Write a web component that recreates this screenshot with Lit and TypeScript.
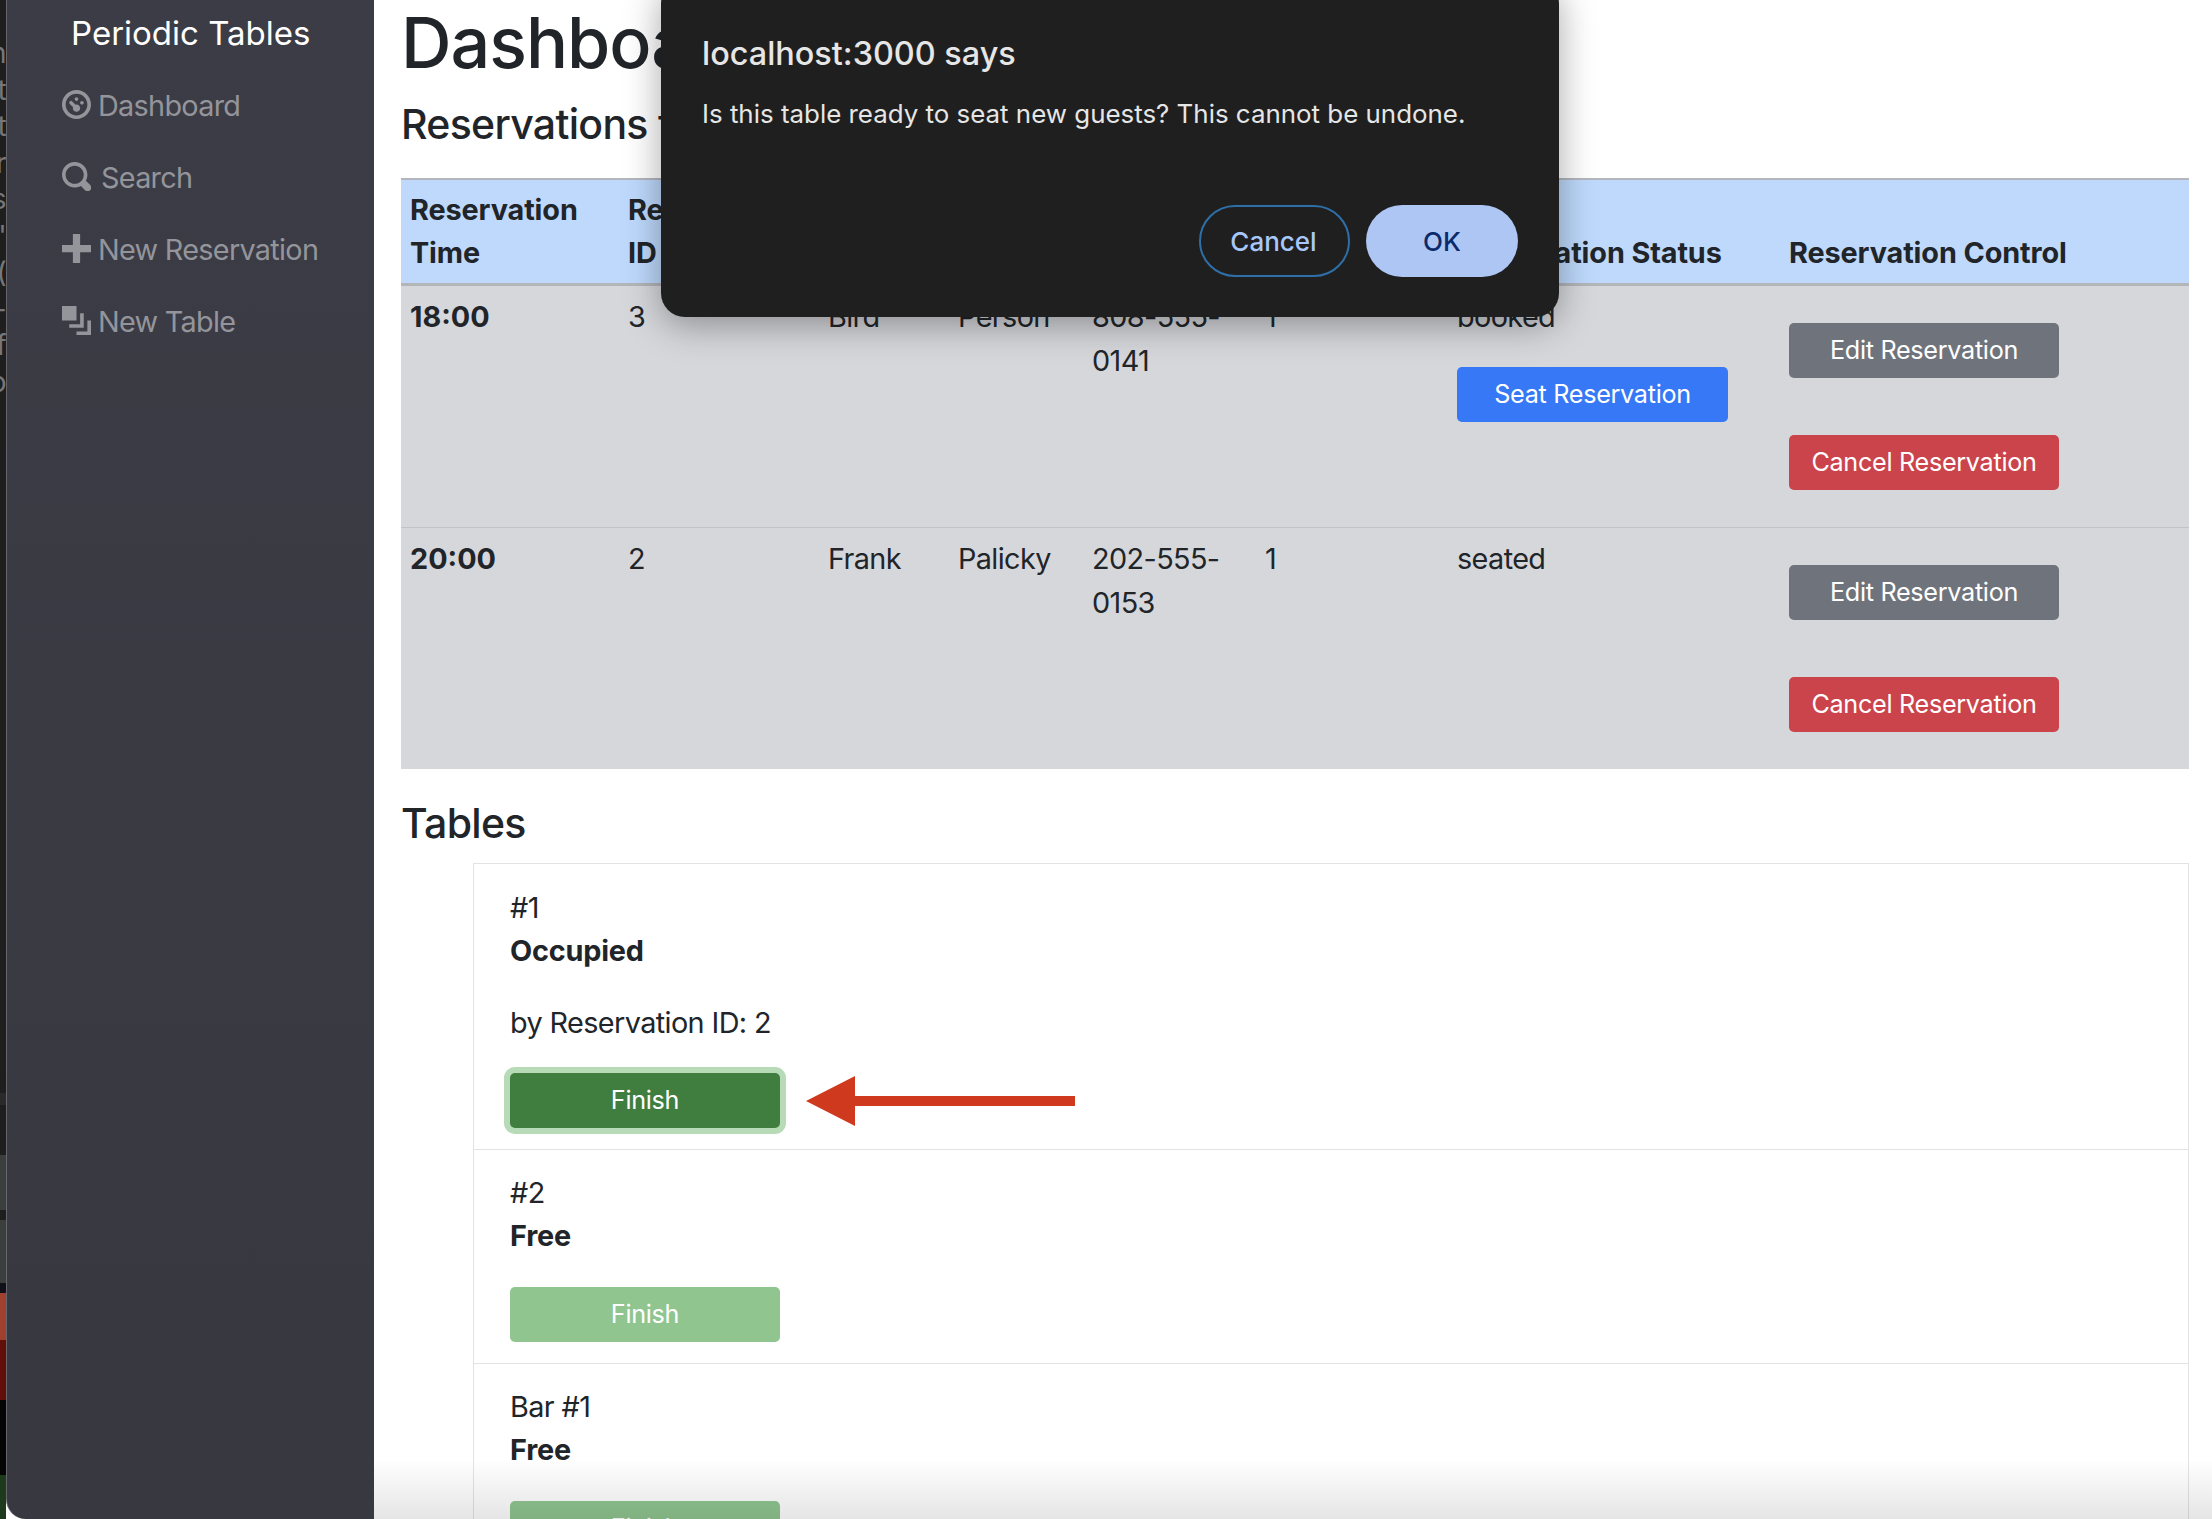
import { LitElement, html, css, svg } from 'lit';
import { customElement } from 'lit/decorators.js';

const ICONS: Record<string, any> = {
  dashboard: svg`<path d="M4 0c-2.2 0-4 1.8-4 4s1.8 4 4 4 4-1.8 4-4-1.8-4-4-4zm0 1c1.66 0 3 1.34 3 3s-1.34 3-3 3-3-1.34-3-3 1.34-3 3-3zm0 1c-.28 0-.5.22-.5.5s.22.5.5.5.5-.22.5-.5-.22-.5-.5-.5zm-1.66 1a.5.5 0 0 0-.19.84l.91.91c-.02.08-.06.16-.06.25 0 .55.45 1 1 1s1-.45 1-1-.45-1-1-1c-.09 0-.17.04-.25.06l-.91-.91a.5.5 0 0 0-.44-.16.5.5 0 0 0-.06 0zm3.16 0c-.28 0-.5.22-.5.5s.22.5.5.5.5-.22.5-.5-.22-.5-.5-.5z"/>`,
  search: svg`<path d="M3.5 0c-1.93 0-3.5 1.57-3.5 3.5s1.57 3.5 3.5 3.5c.59 0 1.17-.14 1.66-.41a1 1 0 0 0 .13.13l1 1a1.02 1.02 0 1 0 1.44-1.44l-1-1a1 1 0 0 0-.16-.13c.27-.49.44-1.06.44-1.66 0-1.93-1.57-3.5-3.5-3.5zm0 1c1.39 0 2.5 1.11 2.5 2.5 0 .66-.24 1.27-.66 1.72-.01.01-.02.02-.03.03a1 1 0 0 0-.13.13c-.44.4-1.04.63-1.69.63-1.39 0-2.5-1.11-2.5-2.5s1.11-2.5 2.5-2.5z"/>`,
  plus: svg`<path d="M3 0v3h-3v2h3v3h2v-3h3v-2h-3v-3h-2z"/>`,
  layers: svg`<path d="M0 0v4h4v-4h-4zm5 2v3h-3v1h4v-4h-1zm2 2v3h-3v1h4v-4h-1z"/>`,
};

const NAV = [
  { icon: 'dashboard', label: 'Dashboard', wide: false },
  { icon: 'search', label: 'Search', wide: true },
  { icon: 'plus', label: 'New Reservation', wide: false },
  { icon: 'layers', label: 'New Table', wide: false },
];

const COLUMNS = [
  ['Reservation Time', 218],
  ['Reservation ID', 200],
  ['First Name', 130],
  ['Last Name', 134],
  ['Mobile Number', 173],
  ['Number of People', 192],
  ['Reservation Status', 332],
  ['Reservation Control', 409],
] as const;

const RESERVATIONS = [
  { time: '18:00', id: 3, first: 'Bird', last: 'Person', mobile: '808-555-0141', people: 1, status: 'booked' },
  { time: '20:00', id: 2, first: 'Frank', last: 'Palicky', mobile: '202-555-0153', people: 1, status: 'seated' },
];

const TABLES = [
  { name: '#1', status: 'Occupied', by: 2 },
  { name: '#2', status: 'Free', by: 0 },
  { name: 'Bar #1', status: 'Free', by: 0 },
];

// what shows of the editor window behind this one
const BEHIND = ['n', 't', 't', 'r', 's', "'", '(', '-', 'f', 'o'];

@customElement('app-root')
export class AppRoot extends LitElement {
  static styles = css`
    :host {
      display: block;
      height: 1519px;
      overflow: hidden;
      position: relative;
      font-family: Inter, 'Liberation Sans', sans-serif;
      font-size: 28.8px;
      line-height: 43.2px;
      letter-spacing: -0.6px;
      color: #212529;
      background: #fff;
    }

    .window {
      display: flex;
      height: 100%;
    }

    .desktop {
      width: 6px;
      flex: none;
      overflow: hidden;
      display: flex;
      flex-direction: column;
      align-items: flex-end;
      box-sizing: border-box;
      padding-top: 35px;
      font-size: 28px;
      line-height: 36.5px;
      color: #77777a;
      background: linear-gradient(
        to bottom,
        #1e1e1e 0 1093px,
        #2a2a2a 1093px 1105px,
        #1e1e1e 1105px 1155px,
        #3a3f3e 1155px 1210px,
        #1e1e1e 1210px 1220px,
        #3a3f3e 1220px 1283px,
        #101018 1283px 1293px,
        #a0402f 1293px 1340px,
        #601008 1340px 1400px,
        #050505 1400px 1475px,
        #1d3a1d 1475px
      );
    }

    .sidebar {
      width: 368px;
      flex: none;
      box-sizing: border-box;
      background: linear-gradient(to bottom, #3c3c46, #383841);
      border-left: 1px solid #66666c;
      border-bottom-left-radius: 20px;
    }

    .brand {
      margin: 7px 0 25px;
      padding-left: 64px;
      font-size: 33px;
      line-height: 52px;
      letter-spacing: 0;
      color: #fff;
    }

    .nav {
      display: flex;
      flex-direction: column;
      gap: 28px;
      padding-left: 55px;
      letter-spacing: -0.7px;
      color: #94959b;
    }

    .nav-item {
      display: flex;
      align-items: center;
      gap: 7px;
      height: 44px;
    }

    .nav-item.wide {
      gap: 10px;
    }

    .nav-item svg {
      width: 29px;
      height: 29px;
      margin-top: -4px;
      fill: currentColor;
      flex: none;
    }

    .main {
      flex: 1;
      position: relative;
      padding: 0 23px 0 27px;
      min-width: 0;
    }

    h1 {
      margin: 0 0 12px;
      font-size: 70px;
      line-height: 86px;
      font-weight: 500;
      letter-spacing: -1px;
    }

    h4 {
      margin: 0 0 28px;
      font-size: 41px;
      line-height: 52px;
      font-weight: 500;
      letter-spacing: -0.7px;
    }

    .tables-title {
      margin: 28px 0 14px;
    }

    table {
      width: 1788px;
      table-layout: fixed;
      border-collapse: collapse;
    }

    th {
      padding: 8px 9px 9px;
      text-align: left;
      vertical-align: bottom;
      font-weight: 700;
      letter-spacing: -0.1px;
      background: #bed9fc;
      border-top: 2px solid #b3b7bd;
      border-bottom: 3px solid #b3b5b9;
    }

    td {
      padding: 9px;
      vertical-align: top;
      background: #d6d7db;
      border-top: 1px solid #c2c3c7;
    }

    tr:first-child td {
      border-top: 0;
    }

    td.time {
      font-weight: 700;
      letter-spacing: 0;
    }

    .seat-wrap {
      margin-top: 28px;
    }

    .controls {
      display: flex;
      flex-direction: column;
      align-items: flex-start;
      gap: 57px;
      padding: 28px 0;
    }

    .btn {
      box-sizing: border-box;
      display: inline-block;
      vertical-align: top;
      width: 270px;
      height: 55px;
      border: 0;
      border-radius: 5px;
      padding: 0;
      font: inherit;
      font-size: 25.2px;
      line-height: 55px;
      letter-spacing: -0.3px;
      text-align: center;
      color: #fff;
    }

    .edit { background: #6f747c; }
    .cancel { background: #cb444b; }
    .seat { background: #3678f6; width: 271px; }
    .finish { background: #90c590; }

    .finish.active {
      background: #3f7e3f;
      box-shadow: 0 0 0 6px #b7dbb7;
    }

    .list {
      border: 1px solid #e2e3e4;
      margin-left: 72px;
      width: 1716px;
      box-sizing: border-box;
    }

    .item {
      padding: 21.6px 36px 21px;
      border-top: 1px solid #e2e3e4;
    }

    .item:first-child {
      border-top: 0;
    }

    .item strong {
      display: block;
      font-weight: 700;
      letter-spacing: -0.2px;
      margin-bottom: 29px;
    }

    .item .by {
      margin: 0 0 28px;
    }

    .arrow {
      position: absolute;
      left: 432px;
      top: 1076px;
      width: 269px;
      height: 50px;
      fill: #cf3a1f;
    }

    .fade {
      position: absolute;
      left: 0;
      right: 0;
      bottom: 0;
      height: 60px;
      background: linear-gradient(to bottom, rgba(0, 0, 0, 0), rgba(0, 0, 0, 0.1));
      pointer-events: none;
    }

    .dialog {
      position: absolute;
      left: 661px;
      top: -20px;
      width: 898px;
      height: 337px;
      box-sizing: border-box;
      padding: 53px 41px 0;
      border-radius: 24px;
      background: #1f1f1f;
      color: #e6e6e6;
      letter-spacing: 0;
      box-shadow: 0 8px 36px rgba(0, 0, 0, 0.35);
    }

    .dialog-title {
      font-size: 32.4px;
      line-height: 42px;
      font-weight: 500;
    }

    .dialog-text {
      margin-top: 19px;
      font-size: 25.9px;
      line-height: 40px;
    }

    .dialog-actions {
      position: absolute;
      right: 41px;
      bottom: 40px;
      display: flex;
      gap: 16px;
    }

    .pill {
      box-sizing: border-box;
      width: 151px;
      height: 72px;
      border-radius: 36px;
      font: inherit;
      font-size: 26px;
      font-weight: 500;
      padding: 2px 0 0;
    }

    .pill.outline {
      background: transparent;
      border: 2px solid #2f6fa8;
      color: #a8c7fa;
      padding-right: 2px;
    }

    .pill.filled {
      width: 152px;
      background: #adc6f4;
      border: 0;
      color: #0b2a6b;
    }
  `;

  renderRow(r: (typeof RESERVATIONS)[number]) {
    return html`
      <tr>
        <td class="time">${r.time}</td>
        <td>${r.id}</td>
        <td>${r.first}</td>
        <td>${r.last}</td>
        <td>${r.mobile}</td>
        <td>${r.people}</td>
        <td>
          ${r.status}
          ${r.status === 'booked'
            ? html`<div class="seat-wrap"><span class="btn seat">Seat Reservation</span></div>`
            : ''}
        </td>
        <td>
          <div class="controls">
            <span class="btn edit">Edit Reservation</span>
            <span class="btn cancel">Cancel Reservation</span>
          </div>
        </td>
      </tr>
    `;
  }

  render() {
    return html`
      <div class="window">
        <div class="desktop">${BEHIND.map((c) => html`<span>${c}</span>`)}</div>
        <nav class="sidebar">
          <div class="brand">Periodic Tables</div>
          <div class="nav">
            ${NAV.map(
              (n) => html`
                <div class="nav-item ${n.wide ? 'wide' : ''}">
                  <svg viewBox="0 0 8 8">${ICONS[n.icon]}</svg>
                  <span>${n.label}</span>
                </div>
              `
            )}
          </div>
        </nav>
        <main class="main">
          <h1>Dashboard</h1>
          <h4>Reservations for today</h4>
          <table>
            <colgroup>${COLUMNS.map((c) => html`<col style="width:${c[1]}px" />`)}</colgroup>
            <thead>
              <tr>${COLUMNS.map((c) => html`<th>${c[0]}</th>`)}</tr>
            </thead>
            <tbody>${RESERVATIONS.map((r) => this.renderRow(r))}</tbody>
          </table>
          <h4 class="tables-title">Tables</h4>
          <div class="list">
            ${TABLES.map(
              (t) => html`
                <div class="item">
                  <div>${t.name}</div>
                  <strong>${t.status}</strong>
                  ${t.by ? html`<div class="by">by Reservation ID: ${t.by}</div>` : ''}
                  <span class="btn finish ${t.by ? 'active' : ''}">Finish</span>
                </div>
              `
            )}
          </div>
          <svg class="arrow" viewBox="0 0 269 50">
            <path d="M0 25L49 0V20H269V30H49V50Z" />
          </svg>
          <div class="fade"></div>
        </main>
      </div>
      <div class="dialog">
        <div class="dialog-title">localhost:3000 says</div>
        <div class="dialog-text">Is this table ready to seat new guests? This cannot be undone.</div>
        <div class="dialog-actions">
          <button class="pill outline">Cancel</button>
          <button class="pill filled">OK</button>
        </div>
      </div>
    `;
  }
}
